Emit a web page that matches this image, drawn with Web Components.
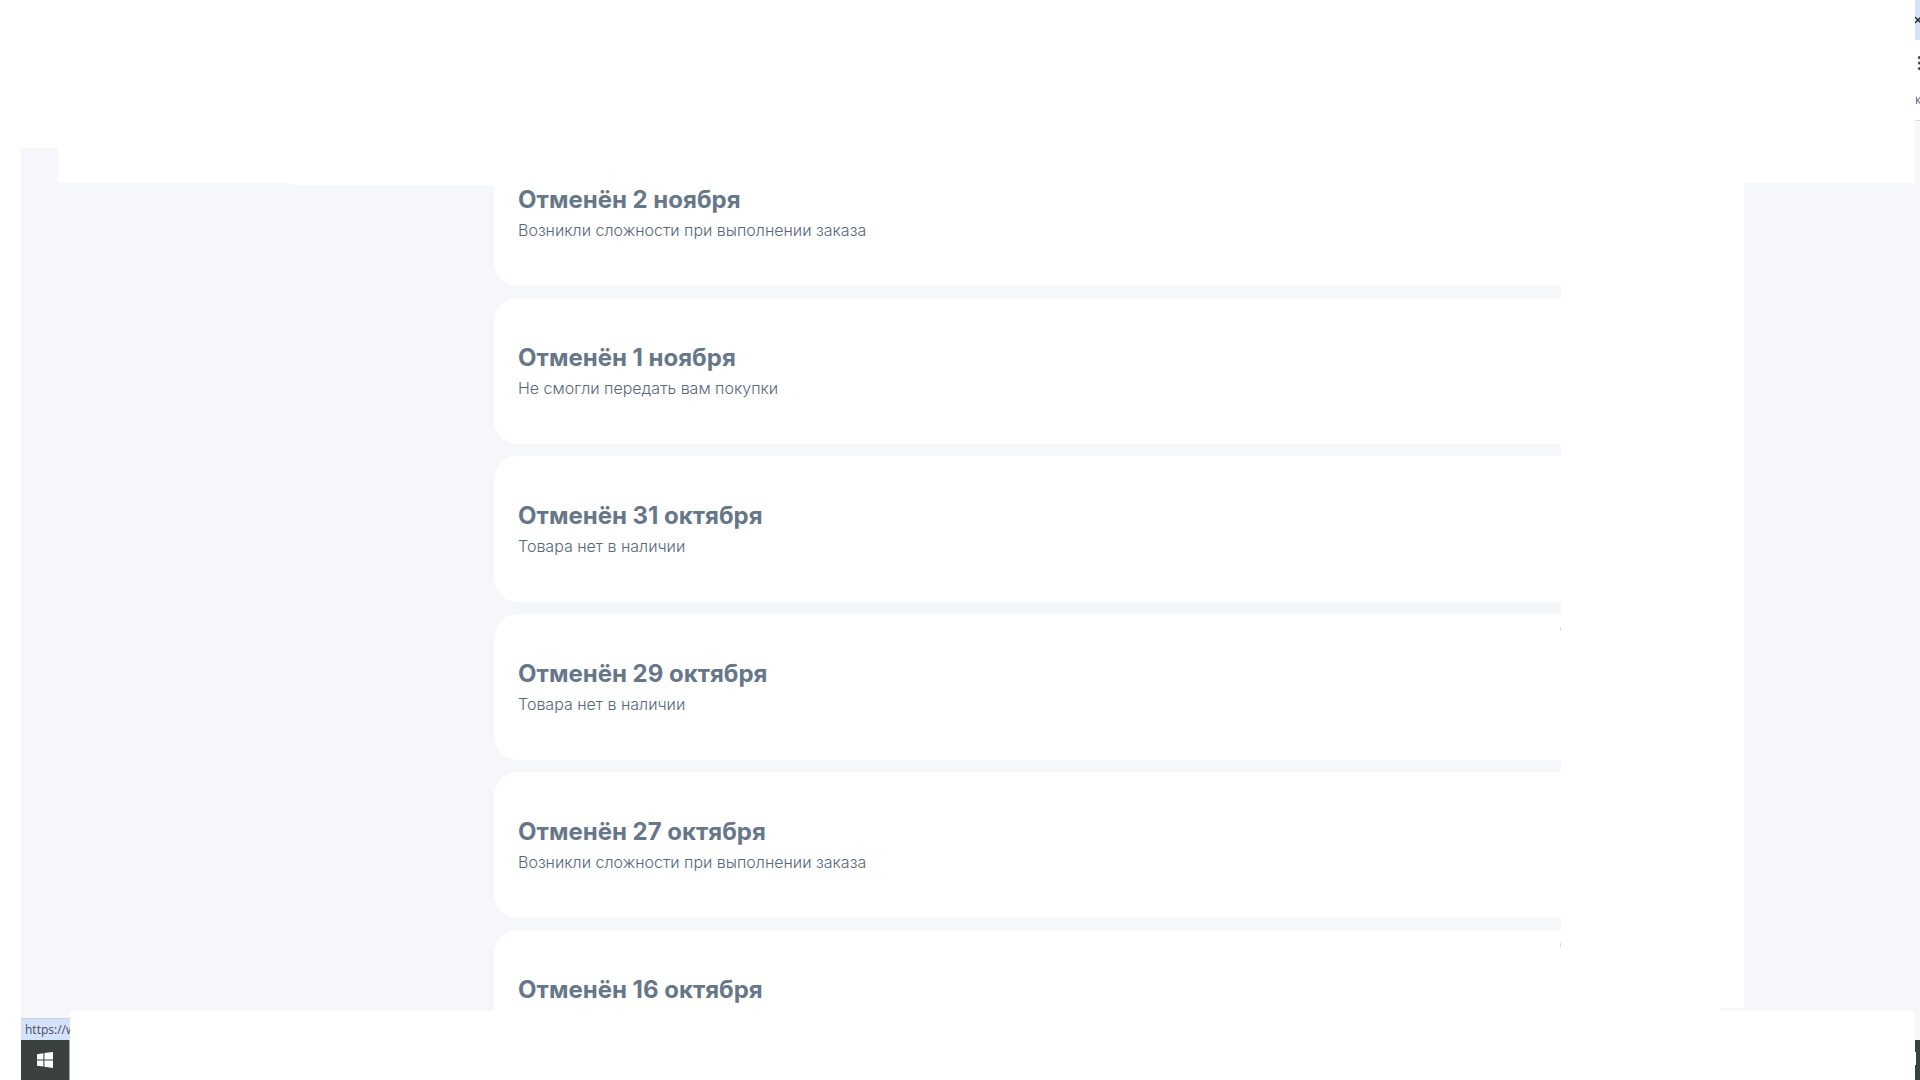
<!DOCTYPE html>
<html lang="ru">
<head>
<meta charset="utf-8">
<title>Заказы</title>
<style>
html,body{margin:0;height:100%}
body{background:#fff;overflow:hidden;font-family:Inter,"Noto Sans",sans-serif;color:#667789}
</style>
</head>
<body>
<orders-screen></orders-screen>
<script>
const define=(name,html)=>{
  const t=document.createElement('template');
  t.innerHTML=html;
  customElements.define(name,class extends HTMLElement{
    constructor(){super();this.attachShadow({mode:'open'}).append(t.content.cloneNode(true));}
  });
};

define('order-card',`<style>
:host{display:block;flex:none;box-sizing:border-box;height:146px;padding:46px 24px 0;background:#fff;border-radius:24px 0 0 24px}
:host([thumb]){background:linear-gradient(#d9dbde,#d9dbde) right 13px/1px 4px no-repeat #fff}
h2{margin:0;font-size:24px;line-height:28px;font-weight:700;white-space:nowrap}
p{margin:4px 0 0;font-size:16px;line-height:24px;font-weight:300;color:#56687c;white-space:nowrap}
</style><h2><slot name="title"></slot></h2><p><slot></slot></p>`);

define('order-list',`<style>
:host{display:flex;flex-direction:column;gap:12px;overflow:hidden;min-width:0;min-height:0}
::slotted(:first-child){margin-top:-43px}
</style><slot></slot>`);

define('page-header',`<style>
:host{display:flex;background:#fff}
i{width:37px;height:35px;align-self:flex-end;background:#f5f7fb}
</style><i></i>`);

define('start-corner',`<style>
:host{display:flex;flex-direction:column;width:49px;background:#f5f7fb;overflow:hidden}
a{box-sizing:border-box;height:22px;margin-top:7px;padding-left:4px;border-top:1px solid #d2d3d6;background:#d3e3fd;color:#4a4d52;font:12px/22px "Open Sans","Noto Sans",sans-serif;text-decoration:none;white-space:nowrap;overflow:hidden}
button{display:block;height:40px;padding:0 0 0 16px;border:0;border-right:1px solid #aaadab;background:#3b413f;text-align:left}
svg{display:block}
</style><a href="#">https://w</a><button aria-label="Пуск"><svg width="16" height="16" viewBox="0 0 16 16" fill="#fff"><path d="M0 2.2 6.4 1.3V7.4H0zM7.4 1.1 16 0V7.4H7.4zM0 8.4H6.4V14.6L0 13.7zM7.4 8.4H16V16L7.4 14.8z"/></svg></button>`);

define('browser-edge',`<style>
:host{display:flex;flex-direction:column;width:5px;background:#f5f7fb;overflow:hidden}
button{display:block;padding:0;border:0;text-align:left;overflow:hidden}
svg{display:block}
.close{height:40px;background:#d3e3fd}
.menu{height:46px;background:#fff}
.mark{box-sizing:border-box;height:35px;padding-top:7px;border-bottom:1px solid #d8d9db;background:#fff;color:#3c6386;font:12px/14px "Open Sans",sans-serif}
.task{height:40px;margin-top:auto;background:#37433f}
</style>
<button class="close" aria-label="Закрыть"><svg width="5" height="40"><path d="M0 17 6 23M0 23 6 17" stroke="#1f2329" stroke-width="1.4"/></svg></button>
<button class="menu" aria-label="Меню"><svg width="5" height="46" fill="#444746"><circle cx="4.5" cy="17.5" r="1.6"/><circle cx="4.5" cy="23" r="1.6"/><circle cx="4.5" cy="28.5" r="1.6"/></svg></button>
<div class="mark">к</div>
<div class="task"><svg width="5" height="40"><path d="M0 12H1V25H0z" fill="#fff"/></svg></div>`);

define('orders-screen',`<style>
:host{display:grid;grid-template-columns:21px minmax(0,1fr) 5px;grid-template-rows:minmax(0,1fr);height:100vh}
main{grid-column:2;display:grid;grid-template-rows:183px minmax(0,1fr) 69px;min-height:0}
.mid{display:grid;grid-template-columns:473px minmax(0,1fr) 183px 171px;grid-template-rows:minmax(0,1fr);min-height:0;overflow:hidden;background:#f5f7fb}
.left svg{display:block;margin-left:auto}
.cover{display:flex;flex-direction:column;background:#fff}
.cover i{width:23px;height:3px;margin:auto 0 0 auto;background:#f5f7fb}
footer{display:flex;background:#fff}
</style>
<main>
<page-header></page-header>
<div class="mid">
<div class="left"><svg width="208" height="2"><path d="M0 0H208V2H10z" fill="#fff"/></svg></div>
<order-list>
<order-card><span slot="title">Отменён 2 ноября</span>Возникли сложности при выполнении заказа</order-card>
<order-card><span slot="title">Отменён 1 ноября</span>Не смогли передать вам покупки</order-card>
<order-card><span slot="title">Отменён 31 октября</span>Товара нет в наличии</order-card>
<order-card thumb><span slot="title">Отменён 29 октября</span>Товара нет в наличии</order-card>
<order-card><span slot="title">Отменён 27 октября</span>Возникли сложности при выполнении заказа</order-card>
<order-card thumb><span slot="title">Отменён 16 октября</span></order-card>
</order-list>
<div class="cover"><i></i></div>
</div>
<footer><start-corner></start-corner></footer>
</main>
<browser-edge></browser-edge>`);
</script>
</body>
</html>
